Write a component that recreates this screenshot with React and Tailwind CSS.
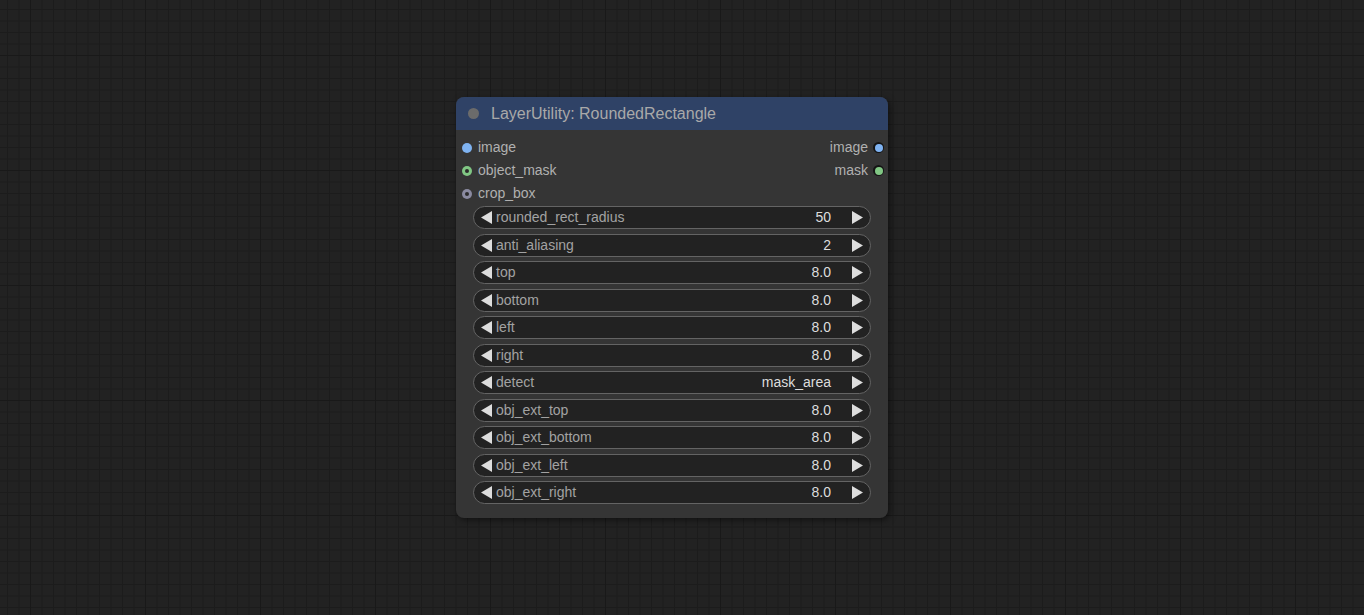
import React from 'react';

const inputs = [
  { name: 'image', kind: 'image' },
  { name: 'object_mask', kind: 'mask' },
  { name: 'crop_box', kind: 'box' },
];

const outputs = [
  { name: 'image', kind: 'image' },
  { name: 'mask', kind: 'mask' },
];

const widgets = [
  ['rounded_rect_radius', '50'],
  ['anti_aliasing', '2'],
  ['top', '8.0'],
  ['bottom', '8.0'],
  ['left', '8.0'],
  ['right', '8.0'],
  ['detect', 'mask_area'],
  ['obj_ext_top', '8.0'],
  ['obj_ext_bottom', '8.0'],
  ['obj_ext_left', '8.0'],
  ['obj_ext_right', '8.0'],
];

function InputDot({ kind }) {
  if (kind === 'image') {
    return <span className="h-[10px] w-[10px] rounded-full bg-[#7fb3f2]" />;
  }
  if (kind === 'mask') {
    return (
      <span className="flex h-[10px] w-[10px] items-center justify-center rounded-full bg-[#81c784]">
        <span className="h-[4px] w-[4px] rounded-full bg-[#2b2b2b]" />
      </span>
    );
  }
  return (
    <span className="flex h-[10px] w-[10px] items-center justify-center rounded-full bg-[#8a8aa0]">
      <span className="h-[4px] w-[4px] rounded-full bg-[#2b2b2b]" />
    </span>
  );
}

function OutputDot({ kind }) {
  const color = kind === 'image' ? 'bg-[#7fb3f2]' : 'bg-[#81c784]';
  return (
    <span className="flex h-[11px] w-[11px] items-center justify-center rounded-full bg-[#141414]">
      <span className={`h-[8px] w-[8px] rounded-full ${color}`} />
    </span>
  );
}

function Arrow({ dir }) {
  return (
    <svg width="11" height="13" viewBox="0 0 11 13" className="shrink-0">
      {dir === 'left' ? (
        <polygon points="11,0 11,13 0,6.5" fill="#dddddd" />
      ) : (
        <polygon points="0,0 0,13 11,6.5" fill="#dddddd" />
      )}
    </svg>
  );
}

function Widget({ label, value }) {
  return (
    <div className="flex h-[23px] items-center rounded-full border border-[#646464] bg-[#222222] pl-[7px] pr-[7px]">
      <Arrow dir="left" />
      <span className="ml-[4px] text-[14px] text-[#a2a2a2]">{label}</span>
      <span className="ml-auto mr-[21px] text-[14px] text-[#dddddd]">{value}</span>
      <Arrow dir="right" />
    </div>
  );
}

export default function App() {
  return (
    <div
      className="relative h-[615px] w-[1364px] overflow-hidden bg-[#222222] bg-[linear-gradient(to_right,#191919_1px,transparent_1px),linear-gradient(to_bottom,#191919_1px,transparent_1px),linear-gradient(to_right,#1c1c1c_1px,transparent_1px),linear-gradient(to_bottom,#1c1c1c_1px,transparent_1px)] bg-[length:115px_115px,115px_115px,11.5px_11.5px,11.5px_11.5px] bg-[position:30px_0,0_55px,7px_0,0_9px]"
      style={{ fontFamily: '"Liberation Sans", Arial, sans-serif' }}
    >
      <div className="absolute left-[456px] top-[97px] w-[432px] rounded-[8px] bg-[#353535] pb-[14px] shadow-[2px_2px_6px_rgba(0,0,0,0.5)]">
        <div className="flex h-[33px] items-center rounded-t-[8px] bg-[#2f4266] pl-[12px]">
          <span className="h-[11px] w-[11px] rounded-full bg-[#6b6b6b]" />
          <span className="ml-[12px] text-[16px] text-[#a9a9a9]">LayerUtility: RoundedRectangle</span>
        </div>

        <div className="flex pt-[6px]">
          <div className="flex flex-1 flex-col">
            {inputs.map((s) => (
              <div key={s.name} className="flex h-[23px] items-center pl-[6px]">
                <span className="flex w-[10px] justify-center">
                  <InputDot kind={s.kind} />
                </span>
                <span className="ml-[6px] text-[14px] text-[#b0b0b0]">{s.name}</span>
              </div>
            ))}
          </div>
          <div className="flex flex-col">
            {outputs.map((s) => (
              <div key={s.name} className="flex h-[23px] items-center justify-end pr-[4px]">
                <span className="mr-[5px] text-[14px] text-[#b0b0b0]">{s.name}</span>
                <OutputDot kind={s.kind} />
              </div>
            ))}
          </div>
        </div>

        <div className="mt-[1px] flex flex-col gap-[4.5px] px-[17px]">
          {widgets.map(([l, v]) => (
            <Widget key={l} label={l} value={v} />
          ))}
        </div>
      </div>
    </div>
  );
}
